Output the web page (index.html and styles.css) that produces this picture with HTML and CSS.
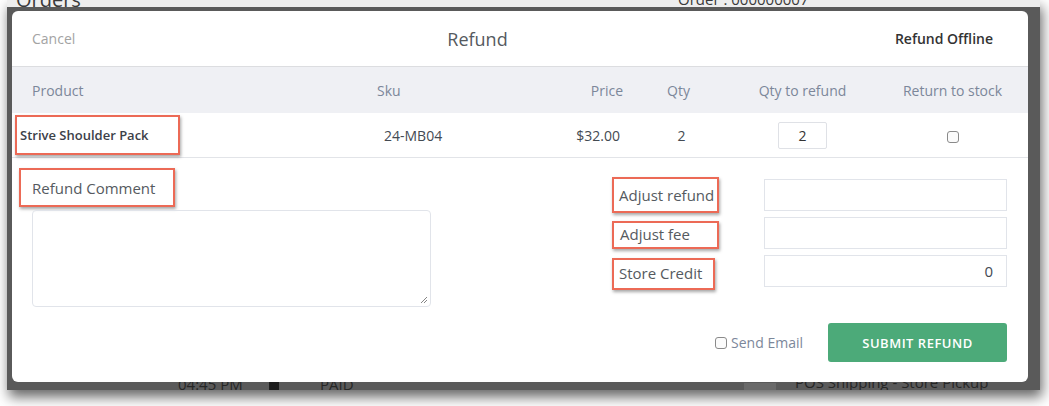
FILE: index.html
```html
<!DOCTYPE html>
<html>
<head>
<meta charset="utf-8">
<link rel="stylesheet" href="styles.css">
</head>
<body>
<div class="stage">
  <div class="backdrop">
    <div class="topstrip"></div>
    <span class="bg-text bg-orders">Orders</span>
    <span class="bg-text bg-order">Order : 000000007</span>
    <span class="bg-text bg-time">04:45 PM</span>
    <span class="bg-square"></span>
    <span class="bg-text bg-paid">PAID</span>
    <span class="bg-block"></span>
    <span class="bg-text bg-ship">POS Shipping - Store Pickup</span>
  </div>

  <div class="modal">
    <div class="modal-header">
      <span class="cancel">Cancel</span>
      <span class="title">Refund</span>
      <span class="offline">Refund Offline</span>
    </div>

    <div class="grid head">
      <div class="c-product">Product</div>
      <div class="c-sku">Sku</div>
      <div class="c-price">Price</div>
      <div class="c-qty">Qty</div>
      <div class="c-refund">Qty to refund</div>
      <div class="c-stock">Return to stock</div>
    </div>

    <div class="grid row">
      <div class="c-product"><span class="mark name-mark">Strive Shoulder Pack</span></div>
      <div class="c-sku sku-val">24-MB04</div>
      <div class="c-price price-val">$32.00</div>
      <div class="c-qty qty-val">2</div>
      <div class="c-refund"><span class="qty-input">2</span></div>
      <div class="c-stock"><span class="check"></span></div>
    </div>

    <div class="lower">
      <div class="lower-main">
        <div class="comment">
          <span class="mark comment-mark">Refund Comment</span>
          <div class="textarea">
            <svg class="grip" width="8" height="8" viewBox="0 0 8 8"><path d="M7 1 L1 7 M7 4 L4 7" stroke="#666" stroke-width="0.8" fill="none"/></svg>
          </div>
        </div>
        <div class="adjust">
          <div class="adj-row">
            <span class="mark adj-mark m1">Adjust refund</span>
            <span class="field"></span>
          </div>
          <div class="adj-row">
            <span class="mark adj-mark m2">Adjust fee</span>
            <span class="field"></span>
          </div>
          <div class="adj-row">
            <span class="mark adj-mark m3">Store Credit</span>
            <span class="field">0</span>
          </div>
        </div>
      </div>
      <div class="footer">
        <label class="send"><span class="check small"></span>Send Email</label>
        <span class="submit">SUBMIT REFUND</span>
      </div>
    </div>
  </div>
</div>
</body>
</html>
```

FILE: styles.css
```css
* { box-sizing: border-box; }
html, body { margin: 0; padding: 0; background: #ffffff; }
body { width: 1049px; height: 406px; overflow: hidden; font-family: "Open Sans", "Noto Sans", sans-serif; }

.stage { position: relative; width: 1049px; height: 406px; }

.backdrop {
  position: absolute; left: 7px; top: 0; width: 1033px; height: 390px;
  background: #5a5a5a;
  box-shadow: 2px 7px 12px rgba(0,0,0,0.6);
  overflow: hidden;
}
.topstrip { position: absolute; left: 0; top: 0; width: 100%; height: 7px; background: #eeeeee; }
.bg-text { position: absolute; color: #2b2b2b; white-space: nowrap; }
.bg-orders { left: 9px; top: -14px; font-size: 20px; color: #3a3a3a; }
.bg-order { left: 671px; top: -11px; font-size: 15px; color: #3a3a3a; }
.bg-time { left: 171px; top: 374px; font-size: 15px; color: #262626; }
.bg-square { position: absolute; left: 262px; top: 382px; width: 10px; height: 8px; background: #1e1e1e; }
.bg-paid { left: 313px; top: 374px; font-size: 15px; color: #262626; }
.bg-block { position: absolute; left: 737px; top: 383px; width: 32px; height: 7px; background: #6a6a6a; }
.bg-ship { left: 788px; top: 372px; font-size: 15px; color: #262626; }

.modal {
  position: absolute; left: 12px; top: 11px; width: 1016px; height: 371px;
  background: #ffffff; border-radius: 6px; overflow: hidden;
  display: flex; flex-direction: column;
}

.modal-header {
  height: 56px; flex: none; display: flex; align-items: center;
  padding: 0 35px 0 20px; border-bottom: 1px solid #dcdde0;
}
.cancel { font-size: 14px; color: #a3a3a3; }
.title { font-size: 18px; color: #555a60; margin-left: 372px; }
.offline { margin-left: auto; font-size: 14px; font-weight: 600; color: #333333; }

.grid {
  display: grid;
  grid-template-columns: 345px 175px 71px 111px 137px 157px;
  padding-left: 20px; align-items: center;
}
.head { height: 46px; background: #eff0f4; color: #7c879a; font-size: 14px; }
.row { height: 45px; border-bottom: 1px solid #e2e4e8; color: #444a52; font-size: 14px; }
.c-price { text-align: right; }
.c-qty, .c-refund { text-align: center; }
.c-stock { text-align: center; padding-left: 6px; }

.mark {
  display: inline-flex; align-items: center;
  border: 2px solid #ec6a56; box-shadow: 1px 2px 3px rgba(0,0,0,0.35);
  color: #555a60; white-space: nowrap;
}
.name-mark {
  margin-left: -17px; height: 40px; padding: 0 29px 0 3px;
  font-size: 13px; font-weight: 600; color: #3c4149;
}
.sku-val { padding-left: 7px; }
.price-val { padding-right: 3px; }
.qty-val { padding-left: 6px; }
.qty-input {
  display: inline-flex; align-items: center; justify-content: center;
  width: 49px; height: 27px; border: 1px solid #dfe1e6; border-radius: 2px;
  font-size: 14px; color: #333;
}
.check {
  display: inline-block; width: 12px; height: 12px; border: 1px solid #8a8a8a;
  border-radius: 3px; background: #fbfbfb; vertical-align: middle;
}

.lower { flex: 1; display: flex; flex-direction: column; }
.lower-main { display: flex; justify-content: space-between; }

.comment { display: flex; flex-direction: column; padding-left: 7px; padding-top: 10px; }
.comment-mark { width: 156px; height: 39px; padding-left: 11px; font-size: 15px; }
.textarea {
  position: relative; margin-left: 13px; margin-top: 3px;
  width: 399px; height: 97px; border: 1px solid #e1e4ea; border-radius: 4px;
}
.grip { position: absolute; right: 2px; bottom: 2px; }

.adjust { display: flex; flex-direction: column; gap: 6px; padding-top: 21px; padding-right: 21px; }
.adj-row { display: flex; align-items: center; height: 32px; }
.adj-mark.m1 { width: 107px; height: 36px; padding-left: 5px; font-size: 15px; }
.adj-mark.m2 { width: 107px; height: 28px; padding-left: 6px; font-size: 15px; margin-top: 4px; align-items: flex-start; padding-top: 1px; }
.adj-mark.m3 { width: 103px; height: 32px; padding-left: 5px; font-size: 15px; margin-top: 6px; align-items: flex-start; padding-top: 3px; }
.field {
  width: 243px; height: 32px; margin-left: 45px;
  border: 1px solid #e1e4ea; display: flex; align-items: center; justify-content: flex-end;
  padding-right: 13px; font-size: 15px; color: #444a52;
}
.adj-row .m3 + .field { margin-left: 49px; }

.footer {
  display: flex; justify-content: flex-end; align-items: center;
  margin-top: 16px; padding-right: 21px; gap: 25px;
}
.send { display: flex; align-items: center; gap: 4px; font-size: 14px; color: #7c879a; }
.submit {
  width: 179px; height: 39px; background: #4caa79; border-radius: 3px;
  color: #ffffff; font-size: 13px; font-weight: 600; letter-spacing: 0.5px;
  display: flex; align-items: center; justify-content: center;
}
```
